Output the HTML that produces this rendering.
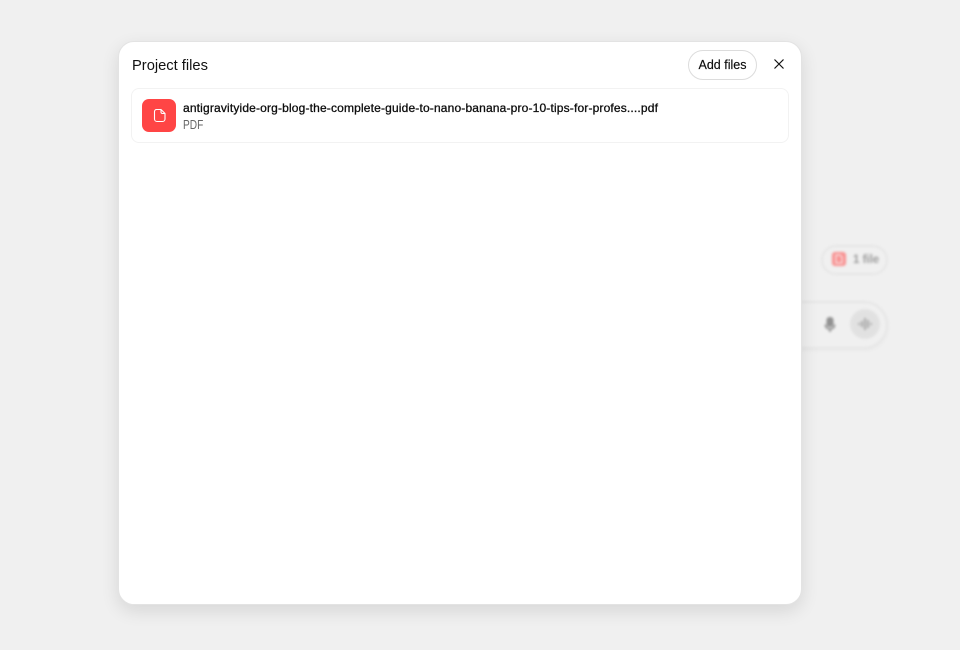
<!DOCTYPE html>
<html>
<head>
<meta charset="utf-8">
<style>
html,body{margin:0;padding:0;width:960px;height:650px;overflow:hidden;background:#f0f0f0;font-family:"Liberation Sans",sans-serif;color:#0d0d0d}
div{box-sizing:border-box}
.abs{position:absolute;white-space:nowrap}
#bg{position:absolute;left:0;top:0;width:960px;height:650px;filter:blur(1.3px);opacity:.55}
#modal{position:absolute;left:118px;top:41px;width:684px;height:564px;background:#fff;border:1px solid #e3e3e3;border-radius:16px;box-shadow:0 6px 18px rgba(0,0,0,.11)}
</style>
</head>
<body>
<div id="bg">
  <div class="abs" style="left:821px;top:245px;width:67px;height:30px;border:2px solid #dedede;border-radius:15px"></div>
  <div class="abs" style="left:832px;top:252px;width:14px;height:14px;background:#ff4545;border-radius:3px"></div>
  <svg class="abs" style="left:834px;top:254px" width="10" height="10" viewBox="0 0 10 10"><path d="M2 1H6L8 3V9H2Z" fill="none" stroke="#fff" stroke-width="1"/></svg>
  <div class="abs" style="left:853px;top:253px;font-size:11.500px;font-weight:bold;color:#555;line-height:15px">1 file</div>
  <div class="abs" style="left:700px;top:301px;width:188px;height:48px;border:2px solid #dedede;border-radius:24px;box-shadow:0 2px 4px rgba(0,0,0,.05)"></div>
  <svg class="abs" style="left:822px;top:316px" width="16" height="18" viewBox="0 0 16 18"><rect x="4.500" y="1" width="7" height="10" rx="3" fill="#444"/><path d="M3.500 8.500c0 3 2 4.500 4.500 4.500s4.500-1.500 4.500-4.500M8 13v3" fill="none" stroke="#444" stroke-width="1.800"/></svg>
  <div class="abs" style="left:850px;top:309px;width:30px;height:30px;border-radius:15px;background:#d6d6d6"></div>
  <svg class="abs" style="left:857px;top:317px" width="16" height="14" viewBox="0 0 16 14"><path d="M2 6v2M5 4v6M8 1v12M11 3v8M14 6v2" stroke="#333" stroke-width="1.200" fill="none"/></svg>
</div>
<div id="modal"></div>
<div class="abs" style="left:132px;top:56px;font-size:14.700px;line-height:20px;color:#111">Project files</div>
<div class="abs" style="left:688px;top:50px;width:69px;height:30px;border:1px solid #dcdcdc;border-radius:15px;background:#fff;font-size:12.500px;line-height:28px;text-align:center;color:#0d0d0d;-webkit-text-stroke:.15px #0d0d0d">Add files</div>
<svg class="abs" style="left:772px;top:57px" width="14" height="14" viewBox="0 0 14 14"><path d="M2.500 2.500L11.500 11.500M11.500 2.500L2.500 11.500" stroke="#111" stroke-width="1.200" fill="none"/></svg>
<div class="abs" style="left:131px;top:88px;width:658px;height:55px;border:1px solid #f2f2f2;border-radius:8px;background:#fff"></div>
<div class="abs" style="left:142px;top:99px;width:34px;height:33px;background:#ff4545;border-radius:7px"></div>
<svg class="abs" style="left:153px;top:108px" width="14" height="15" viewBox="0 0 14 15"><path d="M3.500 1.500H8L12 5.500V11A2.500 2.500 0 0 1 9.500 13.500H4A2.500 2.500 0 0 1 1.500 11V3.500A2 2 0 0 1 3.500 1.500ZM8 1.500V4A1.500 1.500 0 0 0 9.500 5.500H12" fill="none" stroke="#fff" stroke-width="1.100"/></svg>
<div class="abs" style="left:183px;top:100px;font-size:12px;line-height:16px;font-weight:normal;color:#0d0d0d;-webkit-text-stroke:.3px #0d0d0d;letter-spacing:.163px">antigravityide-org-blog-the-complete-guide-to-nano-banana-pro-10-tips-for-profes....pdf</div>
<div class="abs" style="left:183px;top:117px;font-size:12.500px;line-height:16px;color:#666;transform:scaleX(.81);transform-origin:0 0">PDF</div>
</body>
</html>
